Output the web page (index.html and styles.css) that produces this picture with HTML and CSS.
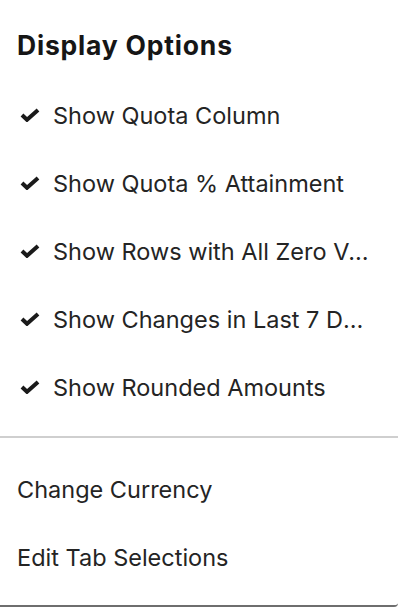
FILE: index.html
```html
<!DOCTYPE html>
<html lang="en">
<head>
<meta charset="utf-8">
<title>Display Options</title>
<link rel="stylesheet" href="styles.css">
</head>
<body>
<div class="panel">
  <h2 class="title">Display Options</h2>
  <ul class="options">
    <li class="option"><svg class="check" viewBox="0 0 20 14" width="20" height="14"><path d="M2 7 L7 11.8 L18 2"/></svg><span class="label">Show Quota Column</span></li>
    <li class="option"><svg class="check" viewBox="0 0 20 14" width="20" height="14"><path d="M2 7 L7 11.8 L18 2"/></svg><span class="label">Show Quota % Attainment</span></li>
    <li class="option"><svg class="check" viewBox="0 0 20 14" width="20" height="14"><path d="M2 7 L7 11.8 L18 2"/></svg><span class="label">Show Rows with All Zero Values</span></li>
    <li class="option"><svg class="check" viewBox="0 0 20 14" width="20" height="14"><path d="M2 7 L7 11.8 L18 2"/></svg><span class="label">Show Changes in Last 7 Days</span></li>
    <li class="option"><svg class="check" viewBox="0 0 20 14" width="20" height="14"><path d="M2 7 L7 11.8 L18 2"/></svg><span class="label">Show Rounded Amounts</span></li>
  </ul>
  <hr class="divider">
  <ul class="actions">
    <li class="action">Change Currency</li>
    <li class="action">Edit Tab Selections</li>
  </ul>
</div>
</body>
</html>
```
FILE: styles.css
```css
html, body {
  margin: 0;
  padding: 0;
  background: #ffffff;
}
body {
  font-family: Inter, "Noto Sans", "Liberation Sans", sans-serif;
  color: #222222;
}
.panel {
  box-sizing: border-box;
  width: 398px;
  height: 607px;
  border-bottom: 2px solid #6e6e6e;
  border-bottom-right-radius: 4px;
  background: #ffffff;
}
.title {
  margin: 0 0 21px 0;
  padding: 30px 0 0 17px;
  font-size: 26.5px;
  line-height: 30px;
  font-weight: 700;
  letter-spacing: 0.8px;
  color: #161616;
}
.options, .actions {
  list-style: none;
  margin: 0;
  padding: 0;
}
.option {
  display: flex;
  align-items: center;
  height: 68px;
  padding-left: 20px;
  padding-right: 28px;
  gap: 13px;
  font-size: 23.5px;
}
.check {
  flex: none;
  fill: none;
  stroke: #1a1a1a;
  stroke-width: 4;
  stroke-linejoin: miter;
  stroke-linecap: butt;
}
.label {
  white-space: nowrap;
  overflow: hidden;
  text-overflow: ellipsis;
  min-width: 0;
  color: #242424;
}
.divider {
  margin: 15px 0 17px 0;
  border: 0;
  height: 2px;
  background: #cfcfcf;
}
.action {
  display: flex;
  align-items: center;
  height: 68px;
  padding-left: 17px;
  font-size: 23.5px;
  color: #242424;
}
```
